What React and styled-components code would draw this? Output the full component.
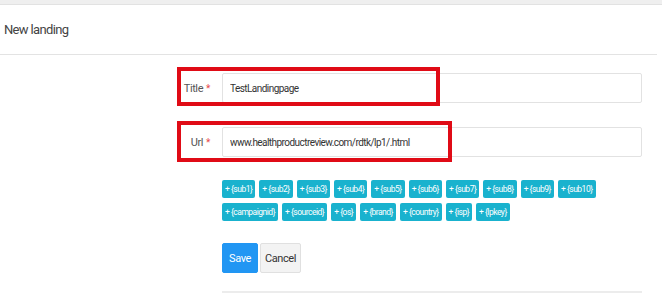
import React from "react";
import styled, { createGlobalStyle } from "styled-components";

const GlobalStyle = createGlobalStyle`
  body {
    margin: 0;
    background: #ffffff;
    font-family: Roboto, "Liberation Sans", Arial, sans-serif;
  }
`;

const Page = styled.div`
  width: 662px;
  height: 293px;
  overflow: hidden;
  background: #ffffff;
`;

const TopStrip = styled.div`
  height: 4px;
  background: #efefef;
  border-bottom: 1px solid #e2e2e2;
`;

const Header = styled.div`
  height: 49px;
  display: flex;
  align-items: center;
  padding-left: 4px;
  margin-right: 5px;
  border-bottom: 1px solid #e3e3e3;
  font-size: 13px;
  letter-spacing: -0.65px;
  color: #444444;
`;

const Body = styled.div`
  padding-top: 18px;
`;

const FormRow = styled.div`
  position: relative;
  display: grid;
  grid-template-columns: 212px 420px;
  column-gap: 10px;
  align-items: center;
  margin-bottom: ${(p) => p.$gap || 0}px;
`;

const Label = styled.label`
  text-align: right;
  padding-right: 2px;
  font-size: 11px;
  letter-spacing: -0.4px;
  color: #555555;
`;

const Required = styled.span`
  color: #e84a4a;
  margin-left: 3px;
  font-size: 10px;
`;

const Input = styled.input`
  height: 30px;
  box-sizing: border-box;
  border: 1px solid #e2e2e2;
  border-radius: 2px;
  padding: 0 7px;
  font-family: inherit;
  font-size: 10px;
  letter-spacing: -0.55px;
  color: #333333;
  background: #ffffff;
  &:focus {
    outline: none;
  }
`;

const Highlight = styled.div`
  position: absolute;
  left: ${(p) => p.$left}px;
  top: ${(p) => p.$top}px;
  width: ${(p) => p.$width}px;
  height: ${(p) => p.$height}px;
  box-sizing: border-box;
  border: 4px solid #e00b16;
  pointer-events: none;
`;

const TagList = styled.div`
  grid-column: 2;
  display: flex;
  flex-wrap: wrap;
  gap: 5px 4px;
`;

const Tag = styled.span`
  height: 18px;
  padding: 0 3px;
  display: inline-flex;
  align-items: center;
  background: #19b2ce;
  color: #ffffff;
  font-size: 8.5px;
  letter-spacing: -0.5px;
  border-radius: 2px;
  white-space: nowrap;
`;

const Actions = styled.div`
  grid-column: 2;
  display: flex;
  gap: 2px;
`;

const Button = styled.button`
  height: 30px;
  padding: 0 ${(p) => (p.$primary ? 6 : 4)}px;
  border: 1px solid ${(p) => (p.$primary ? "#2196f3" : "#e0e0e0")};
  border-radius: 2px;
  background: ${(p) => (p.$primary ? "#2196f3" : "#f3f3f3")};
  color: ${(p) => (p.$primary ? "#ffffff" : "#333333")};
  font-family: inherit;
  font-size: 11px;
  letter-spacing: -0.4px;
  cursor: pointer;
`;

const Divider = styled.div`
  grid-column: 2;
  height: 2px;
  background: #ececec;
`;

const tags = [
  "sub1", "sub2", "sub3", "sub4", "sub5", "sub6", "sub7", "sub8", "sub9", "sub10",
  "campaignid", "sourceid", "os", "brand", "country", "isp", "lpkey",
];

export default function App() {
  return (
    <Page>
      <GlobalStyle />
      <TopStrip />
      <Header>New landing</Header>
      <Body>
        <FormRow $gap={24}>
          <Label>
            Title<Required>*</Required>
          </Label>
          <Input defaultValue="TestLandingpage" />
          <Highlight $left={177} $top={-6} $width={263} $height={39} />
        </FormRow>
        <FormRow $gap={23}>
          <Label>
            Url<Required>*</Required>
          </Label>
          <Input defaultValue="www.healthproductreview.com/rdtk/lp1/.html" />
          <Highlight $left={177} $top={-6} $width={275} $height={41} />
        </FormRow>
        <FormRow $gap={22}>
          <TagList>
            {tags.map((t) => (
              <Tag key={t}>+ {"{" + t + "}"}</Tag>
            ))}
          </TagList>
        </FormRow>
        <FormRow $gap={18}>
          <Actions>
            <Button $primary>Save</Button>
            <Button>Cancel</Button>
          </Actions>
        </FormRow>
        <FormRow>
          <Divider />
        </FormRow>
      </Body>
    </Page>
  );
}
